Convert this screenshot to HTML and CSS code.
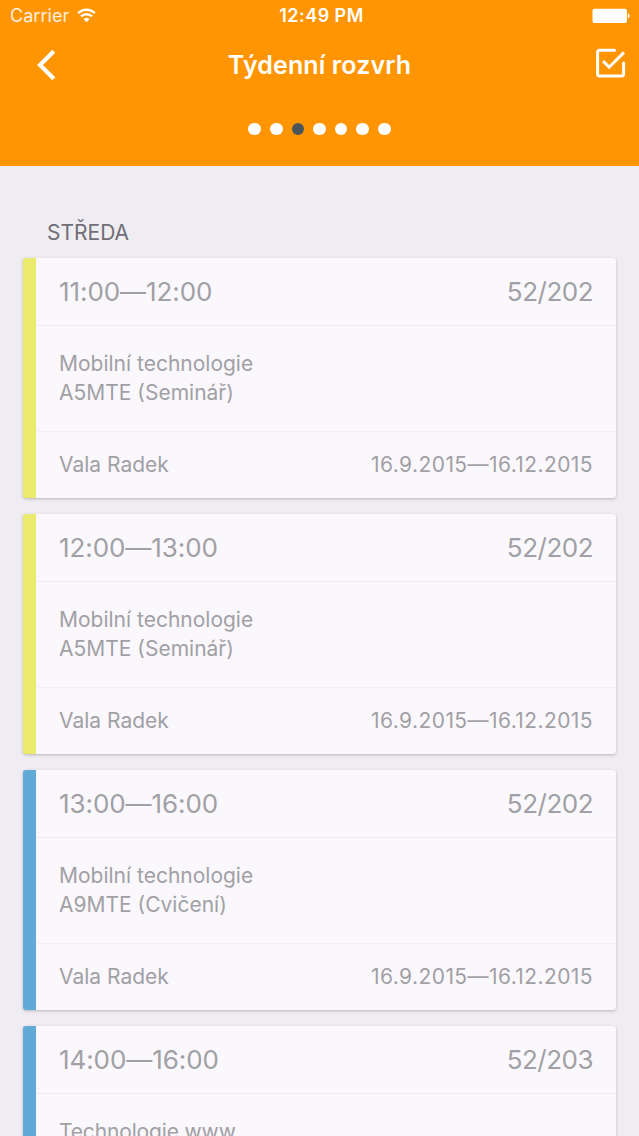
FILE: index.html
```
<!DOCTYPE html>
<html lang="cs">
<head>
<meta charset="utf-8">
<title>Týdenní rozvrh</title>
<link rel="stylesheet" href="styles.css">
</head>
<body>
<div class="screen">
  <header class="header">
    <div class="status">
      <div class="carrier"><span class="carrier-name">Carrier</span>
        <svg class="wifi" width="19" height="15" viewBox="0 0 20 16" fill="none" stroke="#fff" stroke-width="2.6"><path d="M1.1 5.6a12.4 12.4 0 0 1 17.8 0M4.2 9a8.2 8.2 0 0 1 11.6 0"/><path d="M10 15.2 6.8 12a4.6 4.6 0 0 1 6.4 0z" fill="#fff" stroke="none"/></svg>
      </div>
      <span class="clock">12:49 PM</span>
      <svg class="battery" width="38" height="16" viewBox="0 0 38 16" fill="#fff"><rect x=".5" y=".7" width="34.5" height="14.4" rx="2.2"/><path d="M36 5.2a3 3 0 0 1 0 5.4z"/></svg>
    </div>
    <nav class="navbar">
      <svg class="back" width="22" height="32" viewBox="0 0 22 32" fill="none" stroke="#fff" stroke-width="4.2"><path d="M18.8 2.2 5 16l13.8 13.8"/></svg>
      <h1 class="title">Týdenní rozvrh</h1>
      <svg class="check" width="32" height="32" viewBox="0 0 32 32" fill="none" stroke="#fff" stroke-width="3"><path d="M20.5 3.3H5.6a2 2 0 0 0-2 2v21.6a2 2 0 0 0 2 2h22a2 2 0 0 0 2-2V16" stroke-linecap="round"/><path d="m9.1 14 6 6.2L30 5.4"/></svg>
    </nav>
    <div class="dots"><i class="dot"></i><i class="dot"></i><i class="dot active"></i><i class="dot"></i><i class="dot"></i><i class="dot"></i><i class="dot"></i></div>
  </header>
  <main class="content">
    <h2 class="day">STŘEDA</h2>
    <article class="card seminar">
      <div class="card-head"><span class="time">11:00—12:00</span><span class="room">52/202</span></div>
      <div class="card-body"><p class="name">Mobilní technologie</p><p class="code">A5MTE (Seminář)</p></div>
      <div class="card-foot"><span class="teacher">Vala Radek</span><span class="dates">16.9.2015—16.12.2015</span></div>
    </article>
    <article class="card seminar">
      <div class="card-head"><span class="time">12:00—13:00</span><span class="room">52/202</span></div>
      <div class="card-body"><p class="name">Mobilní technologie</p><p class="code">A5MTE (Seminář)</p></div>
      <div class="card-foot"><span class="teacher">Vala Radek</span><span class="dates">16.9.2015—16.12.2015</span></div>
    </article>
    <article class="card exercise">
      <div class="card-head"><span class="time">13:00—16:00</span><span class="room">52/202</span></div>
      <div class="card-body"><p class="name">Mobilní technologie</p><p class="code">A9MTE (Cvičení)</p></div>
      <div class="card-foot"><span class="teacher">Vala Radek</span><span class="dates">16.9.2015—16.12.2015</span></div>
    </article>
    <article class="card exercise">
      <div class="card-head"><span class="time">14:00—16:00</span><span class="room">52/203</span></div>
      <div class="card-body"><p class="name tight">Technologie www</p></div>
    </article>
  </main>
</div>
</body>
</html>
```
FILE: styles.css
```
* { box-sizing: border-box; margin: 0; padding: 0; }
body { font-family: Inter, "Liberation Sans", sans-serif; background: #efedf2; }
.screen { width: 639px; height: 1136px; overflow: hidden; background: #efedf2; }
.header { height: 166px; background: #ff9502; color: #fff; }
.status { height: 32px; display: grid; grid-template-columns: 1fr auto 1fr; align-items: center; padding: 0 9px 0 10px; }
.carrier { display: flex; align-items: center; gap: 8px; }
.carrier-name { font-size: 18px; line-height: 32px; letter-spacing: .05px; opacity: .85; }
.wifi { margin-top: -2px; }
.clock { padding-left: 3px; font-size: 18px; line-height: 32px; font-weight: 600; letter-spacing: .45px; }
.battery { justify-self: end; }
.navbar { height: 66px; display: grid; grid-template-columns: 1fr auto 1fr; align-items: center; padding: 0 13px 0 13px; }
.back { margin-left: 22px; }
.title { font-size: 25px; line-height: 66px; font-weight: 600; letter-spacing: .12px; }
.check { justify-self: end; margin-top: -4px; }
.dots { height: 62px; display: flex; justify-content: center; align-items: center; gap: 9.1px; }
.dot { width: 12.5px; height: 12.5px; border-radius: 50%; background: #fff; }
.dot.active { background: #4a555c; }
.content { padding: 46px 23px 0; }
.day { height: 46px; padding-left: 24px; font-size: 21px; line-height: 41px; font-weight: 400; color: #706d76; }
.card { height: 240px; margin-bottom: 16px; border-left: 13px solid; border-radius: 3px; background: #faf8fd; color: #a1a0a4; box-shadow: 0 1px 3px rgba(60, 50, 70, .3); }
.seminar { border-left-color: #eaea6c; }
.exercise { border-left-color: #5faad6; }
.card-head { height: 68px; display: flex; justify-content: space-between; padding: 0 23px; font-size: 26px; line-height: 67px; border-bottom: 1px solid #eeecf1; }
.time { letter-spacing: -.08px; }
.room { letter-spacing: -.5px; }
.card-body { height: 106px; padding: 23px 23px 0; font-size: 21px; line-height: 29.3px; border-bottom: 1px solid #f2f0f5; }
.tight { letter-spacing: -.15px; }
.card-foot { display: flex; justify-content: space-between; padding: 0 23px; font-size: 21px; line-height: 66px; }
.dates { letter-spacing: .42px; font-feature-settings: "calt" 0; }
```
